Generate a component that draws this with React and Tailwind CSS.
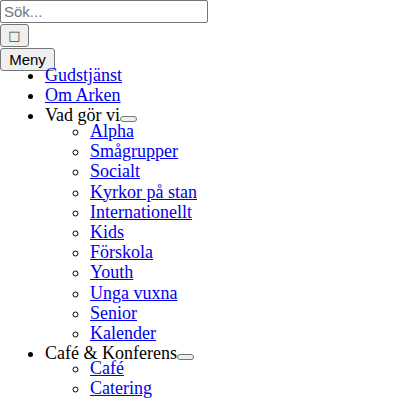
import React from 'react';

const sub1 = ['Alpha', 'Smågrupper', 'Socialt', 'Kyrkor på stan', 'Internationellt', 'Kids', 'Förskola', 'Youth', 'Unga vuxna', 'Senior', 'Kalender'];
const sub2 = ['Café', 'Catering'];

function Toggle() {
	return (
		<button className="inline-block w-[17px] h-[6px] border border-[#767676] bg-[#efefef] rounded-[3px] align-baseline" />
	);
}

function Link({ children }) {
	return <a href="#" className="text-[#0000ee] underline">{children}</a>;
}

function App() {
	return (
		<div className="font-['Liberation_Serif',serif] text-[18px] leading-[20px] text-black">
			<input
				placeholder="Sök..."
				className="block w-[208px] h-[23px] px-[3px] border border-[#767676] rounded-[2px] bg-white font-['Liberation_Sans',sans-serif] text-[15px] placeholder:text-[#757575]"
			/>
			<button className="block w-[29px] h-[23px] mt-px border border-[#767676] rounded-[3px] bg-[#efefef] font-['DejaVu_Sans',sans-serif] text-[13px] leading-[13px] text-[#444]">
				□
			</button>
			<button className="block w-[55px] h-[23px] mt-px border border-[#767676] rounded-[3px] bg-[#efefef] font-['Liberation_Sans',sans-serif] text-[15px] leading-[17px]">
				Meny
			</button>

			<ul className="list-disc pl-[45px] -mt-[6px]">
				<li><Link>Gudstjänst</Link></li>
				<li><Link>Om Arken</Link></li>
				<li>
					Vad gör vi<Toggle />
					<ul className="list-[circle] pl-[45px] -mt-[4px] leading-[20.2px]">
						{sub1.map((s) => <li key={s}><Link>{s}</Link></li>)}
					</ul>
				</li>
				<li>
					Café &amp; Konferens<Toggle />
					<ul className="list-[circle] pl-[45px] -mt-[5px] leading-[20.2px]">
						{sub2.map((s) => <li key={s}><Link>{s}</Link></li>)}
					</ul>
				</li>
			</ul>
		</div>
	);
}

export default App;
